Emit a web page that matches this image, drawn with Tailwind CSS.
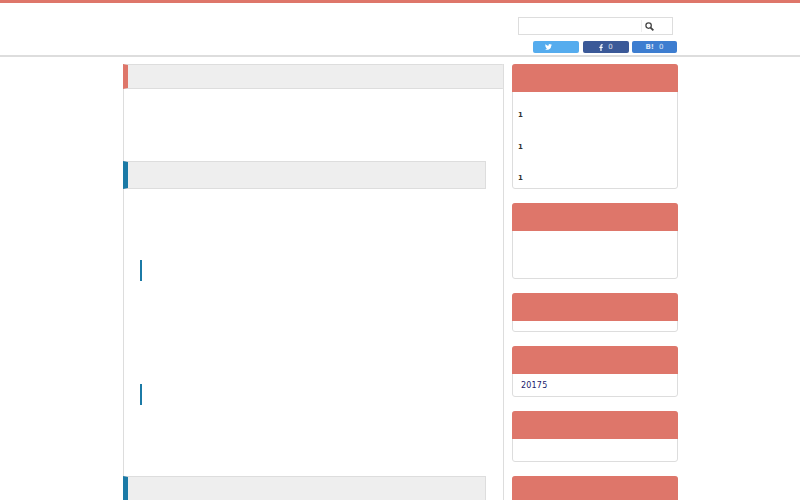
<!DOCTYPE html>
<html lang="en">
<head>
    <meta charset="UTF-8">
    <title>Blog</title>
    <script src="https://cdn.jsdelivr.net/npm/@tailwindcss/browser@4"></script>
</head>
<body class="bg-white overflow-hidden h-[500px] font-['DejaVu_Sans',sans-serif]">
    <!-- header -->
    <div class="h-[57px] border-t-[3px] border-b-2 border-t-[#de766a] border-b-[#dddddd]">
        <div class="w-[555px] ml-[123px] flex flex-col items-end">
            <div class="w-[155px] h-[18px] mt-[14px] mr-[5px] border border-[#dddddd] flex justify-end">
                <div class="w-[31px] h-full flex items-center">
                    <div class="h-[12px] border-l border-[#eeeeee] pl-[3px] flex items-center">
                        <svg width="9" height="9" viewBox="0 0 10 10" fill="none" stroke="#444444" stroke-width="1.4"><circle cx="4" cy="4" r="3"/><path d="M6.200 6.200 9.300 9.300" stroke-width="2"/></svg>
                    </div>
                </div>
            </div>
            <div class="flex mt-[6px] mr-px text-[7px] text-white/80 leading-none">
                <div class="w-[46px] h-[12px] rounded-[2px] bg-[#55acee] flex items-center justify-center pr-[16px]">
                    <svg width="7" height="6" viewBox="0 0 24 20" fill="white"><path d="M24 2.400a10 10 0 0 1-2.800.8A5 5 0 0 0 23.300.500a10 10 0 0 1-3.100 1.200 4.900 4.900 0 0 0-8.400 4.500A14 14 0 0 1 1.700.900a4.900 4.900 0 0 0 1.500 6.600 5 5 0 0 1-2.200-.6c0 2.400 1.700 4.400 3.900 4.900a5 5 0 0 1-2.200.1 4.900 4.900 0 0 0 4.600 3.400A10 10 0 0 1 0 17.300 14 14 0 0 0 21.500 5a10 10 0 0 0 2.500-2.600z"/></svg>
                </div>
                <div class="w-[46px] h-[12px] ml-[4px] rounded-[2px] bg-[#3b5998] flex items-center justify-center gap-[5px]">
                    <svg width="4" height="7" viewBox="0 0 10 18" fill="white"><path d="M6.500 18V10h2.700l.4-3.100H6.500V4.900c0-.9.300-1.500 1.600-1.500h1.600V.6C9.400.6 8.500.5 7.400.5 5 .5 3.400 2 3.400 4.600v2.300H.7V10h2.700v8z"/></svg>
                    <span>0</span>
                </div>
                <div class="w-[45px] h-[12px] ml-[3px] rounded-[2px] bg-[#3d7dd0] flex items-center justify-center gap-[5px]">
                    <span class="font-bold text-[7px]">B!</span>
                    <span>0</span>
                </div>
            </div>
        </div>
    </div>

    <div class="flex ml-[123px] mt-[7px] items-start">
        <!-- main column -->
        <div class="w-[381px] h-[436px] border-x border-[#dddddd]">
            <div class="h-[25px] -mx-px bg-[#eeeeee] border border-[#dddddd] border-l-[5px] border-l-[#de766a] rounded-r-[2px]"></div>
            <div class="h-[28px] mt-[72px] -ml-px w-[363px] bg-[#eeeeee] border border-[#dddddd] border-l-[5px] border-l-[#1b7aa6]"></div>
            <div class="w-[2px] h-[21px] mt-[71px] ml-[16px] bg-[#1b7aa6]"></div>
            <div class="w-[2px] h-[21px] mt-[103px] ml-[16px] bg-[#1b7aa6]"></div>
            <div class="h-[28px] mt-[71px] -ml-px w-[363px] bg-[#eeeeee] border border-[#dddddd] border-l-[5px] border-l-[#1b7aa6]"></div>
        </div>

        <!-- sidebar -->
        <div class="w-[166px] h-[436px] overflow-hidden ml-[8px] flex flex-col gap-[14px]">
            <div class="h-[125px] shrink-0 rounded-[3px] border border-[#dddddd]">
                <div class="h-[28px] -mx-px -mt-px rounded-t-[3px] bg-[#de766a]"></div>
                <div class="pl-[5px] pt-[20px] flex flex-col gap-[24.500px] text-[7px] leading-[7px] font-bold text-[#333333]">
                    <div>1</div>
                    <div>1</div>
                    <div>1</div>
                </div>
            </div>
            <div class="h-[76px] shrink-0 rounded-[3px] border border-[#dddddd]">
                <div class="h-[28px] -mx-px -mt-px rounded-t-[3px] bg-[#de766a]"></div>
            </div>
            <div class="h-[39px] shrink-0 rounded-[3px] border border-[#dddddd]">
                <div class="h-[28px] -mx-px -mt-px rounded-t-[3px] bg-[#de766a]"></div>
            </div>
            <div class="h-[51px] shrink-0 rounded-[3px] border border-[#dddddd]">
                <div class="h-[28px] -mx-px -mt-px rounded-t-[3px] bg-[#de766a]"></div>
                <div class="pl-[8px] pt-[6px] text-[8px] leading-[11px] text-[#1a1a6e] tracking-[0.2px]">20175</div>
            </div>
            <div class="h-[51px] shrink-0 rounded-[3px] border border-[#dddddd]">
                <div class="h-[28px] -mx-px -mt-px rounded-t-[3px] bg-[#de766a]"></div>
            </div>
            <div class="h-[51px] shrink-0 rounded-[3px] border border-[#dddddd]">
                <div class="h-[28px] -mx-px -mt-px rounded-t-[3px] bg-[#de766a]"></div>
            </div>
        </div>
    </div>
</body>
</html>
